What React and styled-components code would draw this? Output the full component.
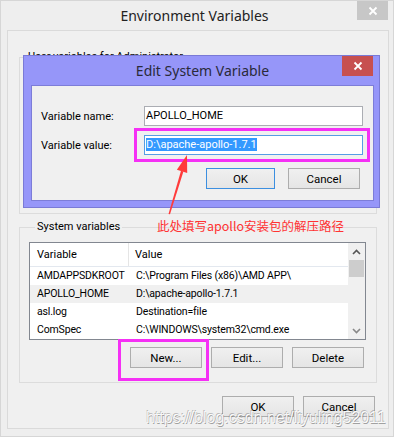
import styled, { createGlobalStyle } from "styled-components";

const GlobalStyle = createGlobalStyle`
  html, body { margin: 0; padding: 0; background: #ffffff; }
  body {
    font-family: "Segoe UI", Roboto, "Noto Sans", sans-serif;
    font-size: 11px;
    color: #000;
  }
  * { box-sizing: border-box; }
`;

const uiFont = `"Segoe UI", Roboto, "Noto Sans", sans-serif`;
const titleFont = `"Segoe UI", "Noto Sans", sans-serif`;

const Window = styled.div`
  position: relative;
  width: 394px;
  height: 437px;
  padding: 1px;
  background: #eeeeee;
  box-shadow: inset 0 0 0 1px #d6d6d6;
  display: flex;
  flex-direction: column;
  overflow: hidden;
`;

const TitleBar = styled.div`
  height: 29px;
  display: grid;
  grid-template-columns: 1fr auto 1fr;
  padding-right: 5px;
`;

const Title = styled.div`
  grid-column: 2;
  font-family: ${titleFont};
  font-size: 14px;
  color: #222;
  line-height: 29px;
`;

const CloseBtn = styled.div`
  grid-column: 3;
  justify-self: end;
  width: 31px;
  height: ${(p) => p.$h || 19}px;
  margin-right: ${(p) => p.$mr || 0}px;
  background: ${(p) => p.$bg || "#c7c7c7"};
  display: flex;
  align-items: center;
  justify-content: center;
`;

const Panel = styled.div`
  margin: 0 4px 7px 6px;
  flex: 1;
  border: 1px solid #dadada;
  background: #f0f0f0;
  padding: 18px 11px 0 11px;
  display: flex;
  flex-direction: column;
`;

const Group = styled.fieldset`
  margin: ${(p) => p.$mt || 0}px 0 0 0;
  padding: ${(p) => p.$pad};
  border: 1px solid #dcdcdc;
  min-width: 0;
  height: ${(p) => p.$h}px;
  display: flex;
  flex-direction: column;
`;

const Legend = styled.legend`
  font-family: ${uiFont};
  font-size: 11px;
  line-height: 16px;
  padding: 0 2px;
  margin-left: 6px;
  color: #000;
`;

const ListBox = styled.div`
  height: 98px;
  border: 1px solid #828790;
  background: #fff;
  display: flex;
  overflow: hidden;
`;

const ListBody = styled.div`
  flex: 1;
  display: flex;
  flex-direction: column;
`;

const HeaderRow = styled.div`
  height: 24px;
  display: grid;
  grid-template-columns: 99px 1fr;
  border-bottom: 1px solid #e3e8ef;
  flex-shrink: 0;
`;

const HeaderCell = styled.div`
  padding-left: ${(p) => p.$pl}px;
  line-height: 23px;
  font-size: 11px;
  border-right: ${(p) => (p.$sep ? "1px solid #e5e5e5" : "none")};
`;

const Row = styled.div`
  height: 18px;
  display: grid;
  grid-template-columns: 99px 1fr;
  background: ${(p) => (p.$sel ? "#f0f0f0" : "transparent")};
  flex-shrink: 0;
`;

const Cell = styled.div`
  padding-left: ${(p) => p.$pl}px;
  line-height: 18px;
  font-size: 10.5px;
  letter-spacing: -0.15px;
  white-space: nowrap;
  overflow: hidden;
`;

const ScrollBar = styled.div`
  width: 17px;
  background: #f0f0f0;
  display: flex;
  flex-direction: column;
  align-items: center;
`;

const ScrollArrow = styled.div`
  height: 17px;
  width: 100%;
  display: flex;
  align-items: center;
  justify-content: center;
`;

const Thumb = styled.div`
  width: 15px;
  height: 17px;
  background: #cdcdcd;
`;

const ScrollSpace = styled.div`
  flex: 1;
`;

const ButtonRow = styled.div`
  display: flex;
  justify-content: flex-end;
  gap: ${(p) => p.$gap || 9}px;
  margin-top: ${(p) => p.$mt || 0}px;
  margin-right: ${(p) => p.$mr || 0}px;
`;

const Button = styled.div`
  width: ${(p) => p.$w || 72}px;
  height: 21px;
  border: 1px solid ${(p) => (p.$focus ? "#3c8fe0" : "#adadad")};
  background: linear-gradient(#f0f0f0, #e5e5e5);
  font-family: ${uiFont};
  font-size: 11.5px;
  display: flex;
  align-items: center;
  justify-content: center;
  color: #000;
`;

/* Edit System Variable dialog, floating over the parent window */
const Dialog = styled.div`
  position: absolute;
  left: 23px;
  top: 55px;
  width: 357px;
  height: 153px;
  border: 1px solid #7a7ad6;
  background: #9696f9;
  display: flex;
  flex-direction: column;
  padding: 0 5px 6px 7px;
`;

const DialogTitleBar = styled.div`
  height: 29px;
  display: grid;
  grid-template-columns: 1fr auto 1fr;
`;

const DialogTitle = styled.div`
  grid-column: 2;
  font-family: ${titleFont};
  font-size: 14px;
  color: #2a2a3a;
  line-height: 30px;
`;

const DialogBody = styled.div`
  flex: 1;
  background: #f0f0f0;
  border: 1px solid #7d7dd8;
  padding: 20px 10px 0 9px;
  display: flex;
  flex-direction: column;
`;

const FieldGrid = styled.div`
  display: grid;
  grid-template-columns: 103px 1fr;
  row-gap: 9px;
  align-items: center;
`;

const Label = styled.div`
  font-size: 11px;
`;

const TextBox = styled.div`
  height: 20px;
  border: 1px solid ${(p) => (p.$focus ? "#569de5" : "#abadb3")};
  background: #fff;
  font-size: 11px;
  line-height: 18px;
  padding-left: 1px;
  white-space: nowrap;
`;

const Selected = styled.span`
  background: #3399ff;
  color: #fff;
`;

const Highlight = styled.div`
  position: absolute;
  left: ${(p) => p.$x}px;
  top: ${(p) => p.$y}px;
  width: ${(p) => p.$w}px;
  height: ${(p) => p.$h}px;
  border: 3px solid #f530f5;
`;

const Note = styled.div`
  position: absolute;
  left: 157px;
  top: 217px;
  font-family: "Noto Sans CJK SC", "Noto Sans", sans-serif;
  font-size: 12.5px;
  line-height: 18px;
  color: #ff3333;
  white-space: nowrap;
`;

const ArrowSvg = styled.svg`
  position: absolute;
  left: 160px;
  top: 150px;
`;

const Watermark = styled.div`
  position: absolute;
  left: 146px;
  top: 408px;
  font-family: "Liberation Sans", Arial, sans-serif;
  font-size: 16px;
  line-height: 20px;
  color: rgba(255, 255, 255, 0.92);
  text-shadow: 0.6px 0.6px 0.6px rgba(60, 60, 60, 0.45),
    -0.6px -0.6px 0.6px rgba(60, 60, 60, 0.3);
  white-space: nowrap;
`;

const XIcon = () => (
  <svg width="10" height="10" viewBox="0 0 10 10">
    <path d="M1.5 1.5 L8.5 8.5 M8.5 1.5 L1.5 8.5" stroke="#fff" strokeWidth="1.8" />
  </svg>
);

const Chevron = ({ up }) => (
  <svg width="9" height="6" viewBox="0 0 9 6">
    <path
      d={up ? "M1 5 L4.5 1.5 L8 5" : "M1 1 L4.5 4.5 L8 1"}
      fill="none"
      stroke={up ? "#555" : "#888"}
      strokeWidth="1.6"
    />
  </svg>
);

const rows = [
  ["AMDAPPSDKROOT", "C:\\Program Files (x86)\\AMD APP\\"],
  ["APOLLO_HOME", "D:\\apache-apollo-1.7.1", true],
  ["asl.log", "Destination=file"],
  ["ComSpec", "C:\\WINDOWS\\system32\\cmd.exe"],
];

export default function App() {
  return (
    <>
      <GlobalStyle />
      <Window>
        <TitleBar>
          <Title>Environment Variables</Title>
          <CloseBtn>
            <XIcon />
          </CloseBtn>
        </TitleBar>
        <Panel>
          <Group $h={165} $pad="0">
            <Legend>User variables for Administrator</Legend>
          </Group>
          <Group $mt={5} $h={164} $pad="7px 10px 14px 9px">
            <Legend>System variables</Legend>
            <ListBox>
              <ListBody>
                <HeaderRow>
                  <HeaderCell $pl={7} $sep>Variable</HeaderCell>
                  <HeaderCell $pl={6}>Value</HeaderCell>
                </HeaderRow>
                {rows.map(([name, value, sel]) => (
                  <Row key={name} $sel={sel}>
                    <Cell $pl={7}>{name}</Cell>
                    <Cell $pl={7}>{value}</Cell>
                  </Row>
                ))}
              </ListBody>
              <ScrollBar>
                <ScrollArrow>
                  <Chevron up />
                </ScrollArrow>
                <Thumb />
                <ScrollSpace />
                <ScrollArrow>
                  <Chevron />
                </ScrollArrow>
              </ScrollBar>
            </ListBox>
            <ButtonRow $mt={7} $mr={2}>
              <Button>New...</Button>
              <Button>Edit...</Button>
              <Button>Delete</Button>
            </ButtonRow>
          </Group>
          <ButtonRow $mt={13} $mr={2}>
            <Button>OK</Button>
            <Button>Cancel</Button>
          </ButtonRow>
        </Panel>

        <Dialog>
          <DialogTitleBar>
            <DialogTitle>Edit System Variable</DialogTitle>
            <CloseBtn $bg="#c75050" $h={20} $mr={1}>
              <XIcon />
            </CloseBtn>
          </DialogTitleBar>
          <DialogBody>
            <FieldGrid>
              <Label>Variable name:</Label>
              <TextBox>APOLLO_HOME</TextBox>
              <Label>Variable value:</Label>
              <TextBox $focus>
                <Selected>D:\apache-apollo-1.7.1</Selected>
              </TextBox>
            </FieldGrid>
            <ButtonRow $mt={13} $mr={3} $gap={13}>
              <Button $w={69} $focus>OK</Button>
              <Button>Cancel</Button>
            </ButtonRow>
          </DialogBody>
        </Dialog>

        <Highlight $x={134} $y={128} $w={236} $h={34} />
        <Highlight $x={118} $y={339} $w={91} $h={42} />

        <ArrowSvg width="34" height="70" viewBox="160 150 34 70">
          <polygon points="168.5,214 170,214.3 183.4,171.5 181,170.8" fill="#ff3b3b" />
          <polygon points="187,155 187.2,173 176.9,169.8" fill="#ff3b3b" />
        </ArrowSvg>

        <Note>此处填写apollo安装包的解压路径</Note>
        <Watermark>https://blog.csdn.net/liyuling52011</Watermark>
      </Window>
    </>
  );
}
